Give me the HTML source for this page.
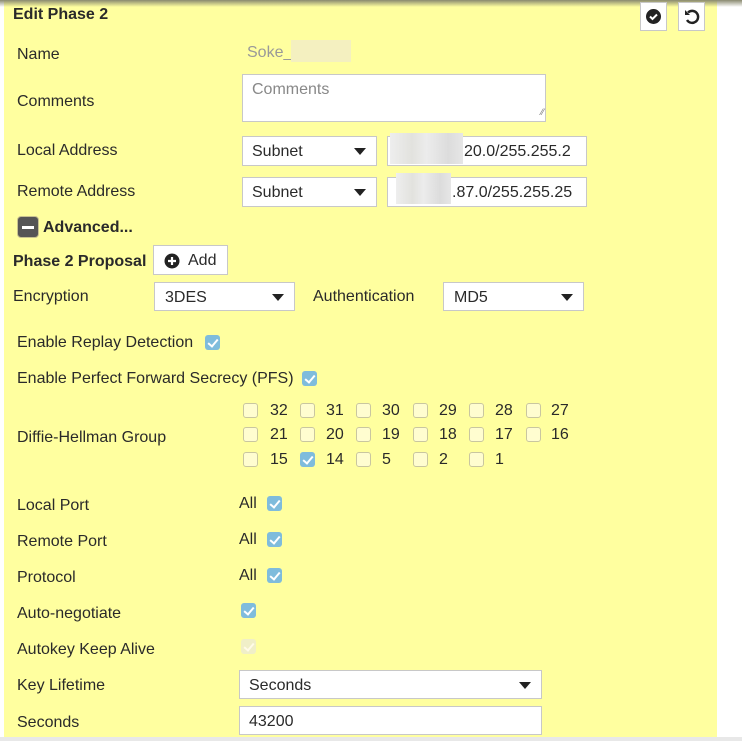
<!DOCTYPE html>
<html><head><meta charset="utf-8"><style>
*{box-sizing:border-box;margin:0;padding:0}
body{width:742px;height:741px;background:#fff;position:relative;overflow:hidden;font-family:"Liberation Sans",sans-serif;font-size:16px;color:#2a2a2a}
#p{position:absolute;left:4px;top:0;width:713px;height:737px;background:#ffff9f}
#sh{position:absolute;left:0;top:0;width:742px;height:7px;background:linear-gradient(#8a8a70,rgba(255,255,159,0))}
#bl{position:absolute;left:0;top:737px;width:742px;height:4px;background:#e8e8e8}
.a{position:absolute;white-space:nowrap;line-height:18px;margin-top:1px}
.b{font-weight:bold}
.box{position:absolute;background:#fff;border:1px solid #c8c8c8}
.sel::after{content:"";position:absolute;right:10px;top:50%;margin-top:-3px;border-left:6px solid transparent;border-right:6px solid transparent;border-top:7px solid #222}
.cb{position:absolute;width:15px;height:15px;border-radius:3px}
.on{background:#7fbcdc}
.on::after{content:"";position:absolute;left:5px;top:2px;width:4px;height:8px;border:solid #fff;border-width:0 2px 2px 0;transform:rotate(40deg)}
.off{background:#fffdd0;border:1px solid #c9c6a0}
.dis{background:#f0efc8}
.dis::after{content:"";position:absolute;left:5px;top:2px;width:4px;height:8px;border:solid #fffbe8;border-width:0 2px 2px 0;transform:rotate(40deg)}
.blur{position:absolute;background:linear-gradient(90deg,#eee 0,#e2e2de 30%,#ececec 50%,#dcdcdc 80%,#e6e6e6)}
</style></head><body>
<div id="p"></div><div id="sh"></div><div id="bl"></div>
<div class="a b" style="left:13px;top:5px">Edit Phase 2</div>
<div class="box" style="left:640px;top:2px;width:27px;height:29px"><svg width="25" height="27" viewBox="0 0 25 27"><circle cx="12.5" cy="13.5" r="7.5" fill="#222"/><path d="M9 13.5l2.5 2.5 4.5-4.5" stroke="#fff" stroke-width="2" fill="none"/></svg></div>
<div class="box" style="left:678px;top:2px;width:27px;height:29px"><svg width="25" height="27" viewBox="0 0 25 27"><path d="M9 9.5A6 6 0 1 1 8 17" stroke="#222" stroke-width="2.4" fill="none"/><path d="M6 7v5h5z" fill="#222"/></svg></div>
<div class="a" style="left:17px;top:45px">Name</div>
<div class="a" style="left:247px;top:43px;color:#999">Soke_</div>
<div class="blur" style="left:291px;top:40px;width:60px;height:22px;background:#f4f0c0"></div>
<div class="a" style="left:17px;top:92px">Comments</div>
<div class="box" style="left:242px;top:74px;width:304px;height:48px"><span class="a" style="left:9px;top:5px;color:#888">Comments</span><span class="a" style="right:1px;bottom:0;font-size:9px;color:#777">⁄⁄</span></div>
<div class="a" style="left:17px;top:141px">Local Address</div>
<div class="box sel" style="left:242px;top:136px;width:135px;height:30px"><span class="a" style="left:9px;top:5px">Subnet</span></div>
<div class="box" style="left:387px;top:136px;width:200px;height:30px"><span class="a" style="left:76px;top:5px">20.0/255.255.2</span></div>
<div class="blur" style="left:390px;top:133px;width:73px;height:31px"></div>
<div class="a" style="left:17px;top:182px">Remote Address</div>
<div class="box sel" style="left:242px;top:177px;width:135px;height:30px"><span class="a" style="left:9px;top:5px">Subnet</span></div>
<div class="box" style="left:387px;top:177px;width:200px;height:30px"><span class="a" style="left:64px;top:5px">.87.0/255.255.25</span></div>
<div class="blur" style="left:396px;top:173px;width:55px;height:31px"></div>
<div style="position:absolute;left:17px;top:216px;width:22px;height:22px;border:1px solid #c8c290;background:#555;border-radius:4px"><div style="position:absolute;left:4px;top:9px;width:12px;height:3px;background:#fff"></div></div>
<div class="a b" style="left:43px;top:218px">Advanced...</div>
<div class="a b" style="left:13px;top:252px">Phase 2 Proposal</div>
<div class="box" style="left:153px;top:245px;width:75px;height:30px"><svg style="position:absolute;left:10px;top:7px" width="16" height="16" viewBox="0 0 16 16"><circle cx="8" cy="8" r="7.5" fill="#222"/><path d="M8 4v8M4 8h8" stroke="#fff" stroke-width="2.2"/></svg><span class="a" style="left:34px;top:5px">Add</span></div>
<div class="a" style="left:13px;top:287px">Encryption</div>
<div class="box sel" style="left:154px;top:282px;width:141px;height:29px"><span class="a" style="left:10px;top:5px">3DES</span></div>
<div class="a" style="left:313px;top:287px">Authentication</div>
<div class="box sel" style="left:443px;top:282px;width:141px;height:29px"><span class="a" style="left:10px;top:5px">MD5</span></div>
<div class="a" style="left:17px;top:333px">Enable Replay Detection</div>
<div class="cb on" style="left:205px;top:335px"></div>
<div class="a" style="left:17px;top:369px">Enable Perfect Forward Secrecy (PFS)</div>
<div class="cb on" style="left:302px;top:371px"></div>
<div class="a" style="left:17px;top:428px">Diffie-Hellman Group</div>
<div class="cb off" style="left:243px;top:403px"></div><div class="a" style="left:270px;top:401px">32</div>
<div class="cb off" style="left:300px;top:403px"></div><div class="a" style="left:326px;top:401px">31</div>
<div class="cb off" style="left:356px;top:403px"></div><div class="a" style="left:382px;top:401px">30</div>
<div class="cb off" style="left:413px;top:403px"></div><div class="a" style="left:439px;top:401px">29</div>
<div class="cb off" style="left:469px;top:403px"></div><div class="a" style="left:495px;top:401px">28</div>
<div class="cb off" style="left:526px;top:403px"></div><div class="a" style="left:551px;top:401px">27</div>
<div class="cb off" style="left:243px;top:427px"></div><div class="a" style="left:270px;top:425px">21</div>
<div class="cb off" style="left:300px;top:427px"></div><div class="a" style="left:326px;top:425px">20</div>
<div class="cb off" style="left:356px;top:427px"></div><div class="a" style="left:382px;top:425px">19</div>
<div class="cb off" style="left:413px;top:427px"></div><div class="a" style="left:439px;top:425px">18</div>
<div class="cb off" style="left:469px;top:427px"></div><div class="a" style="left:495px;top:425px">17</div>
<div class="cb off" style="left:526px;top:427px"></div><div class="a" style="left:551px;top:425px">16</div>
<div class="cb off" style="left:243px;top:452px"></div><div class="a" style="left:270px;top:450px">15</div>
<div class="cb on" style="left:300px;top:452px"></div><div class="a" style="left:326px;top:450px">14</div>
<div class="cb off" style="left:356px;top:452px"></div><div class="a" style="left:382px;top:450px">5</div>
<div class="cb off" style="left:413px;top:452px"></div><div class="a" style="left:439px;top:450px">2</div>
<div class="cb off" style="left:469px;top:452px"></div><div class="a" style="left:495px;top:450px">1</div>
<div class="a" style="left:17px;top:496px">Local Port</div>
<div class="a" style="left:239px;top:494px">All</div><div class="cb on" style="left:267px;top:496px"></div>
<div class="a" style="left:17px;top:532px">Remote Port</div>
<div class="a" style="left:239px;top:530px">All</div><div class="cb on" style="left:267px;top:532px"></div>
<div class="a" style="left:17px;top:568px">Protocol</div>
<div class="a" style="left:239px;top:566px">All</div><div class="cb on" style="left:267px;top:568px"></div>
<div class="a" style="left:17px;top:604px">Auto-negotiate</div>
<div class="cb on" style="left:241px;top:603px"></div>
<div class="a" style="left:17px;top:640px">Autokey Keep Alive</div>
<div class="cb dis" style="left:241px;top:639px"></div>
<div class="a" style="left:17px;top:676px">Key Lifetime</div>
<div class="box sel" style="left:239px;top:670px;width:303px;height:29px"><span class="a" style="left:9px;top:5px">Seconds</span></div>
<div class="a" style="left:17px;top:713px">Seconds</div>
<div class="box" style="left:239px;top:706px;width:303px;height:29px"><span class="a" style="left:9px;top:5px">43200</span></div>
</body></html>
